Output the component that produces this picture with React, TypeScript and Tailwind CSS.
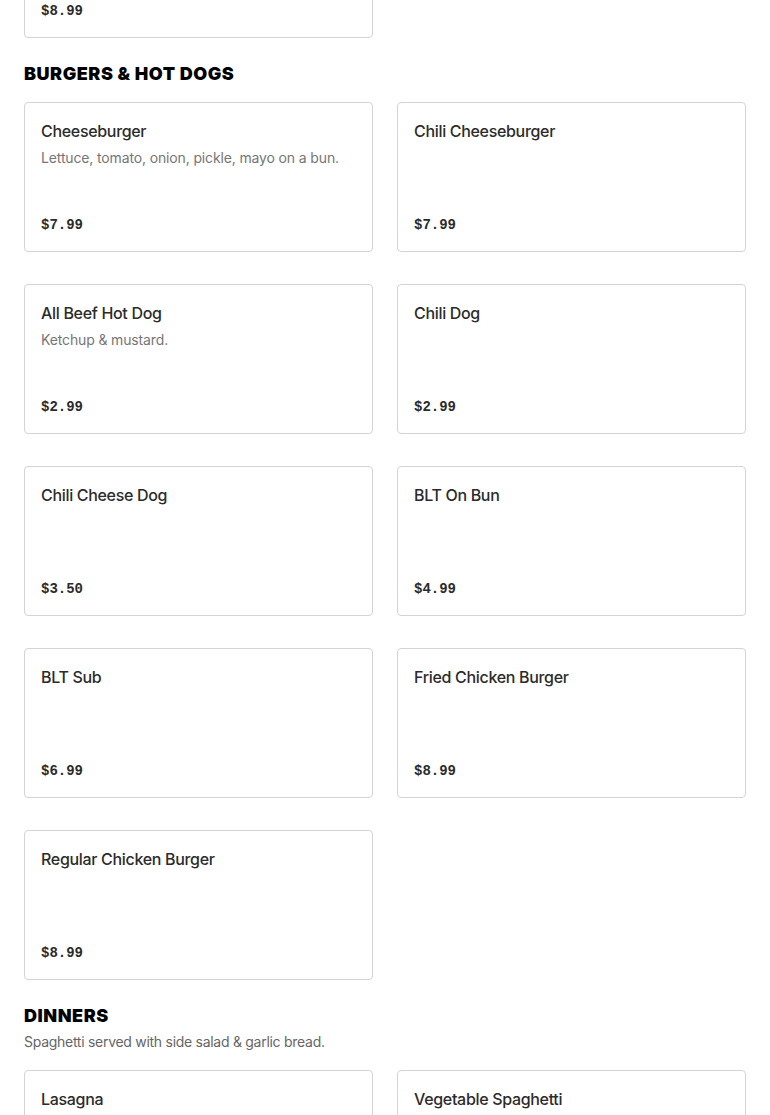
import React from "react";

type Item = { name: string; desc?: string; price: string };

const burgers: Item[] = [
  { name: "Cheeseburger", desc: "Lettuce, tomato, onion, pickle, mayo on a bun.", price: "$7.99" },
  { name: "Chili Cheeseburger", price: "$7.99" },
  { name: "All Beef Hot Dog", desc: "Ketchup & mustard.", price: "$2.99" },
  { name: "Chili Dog", price: "$2.99" },
  { name: "Chili Cheese Dog", price: "$3.50" },
  { name: "BLT On Bun", price: "$4.99" },
  { name: "BLT Sub", price: "$6.99" },
  { name: "Fried Chicken Burger", price: "$8.99" },
  { name: "Regular Chicken Burger", price: "$8.99" },
];

const dinners: Item[] = [
  { name: "Lasagna", price: "$12.99" },
  { name: "Vegetable Spaghetti", price: "$10.99" },
];

function Card({ item }: { item: Item }) {
  return (
    <div className="flex h-[150px] flex-col rounded-[4px] border border-[#d4d4d4] bg-white p-4">
      <div className="text-[16px] leading-6 font-medium tracking-[-0.02em] text-[#2b2b2b]">{item.name}</div>
      {item.desc && (
        <div className="mt-[5px] text-[14px] leading-5 tracking-[-0.01em] text-[#767676]">{item.desc}</div>
      )}
      <div
        className="mt-auto text-[14px] leading-5 font-bold text-[#2b2b2b]"
        style={{ fontFamily: '"Liberation Mono", monospace' }}
      >
        {item.price}
      </div>
    </div>
  );
}

export default function App() {
  return (
    <div
      className="h-[1115px] overflow-hidden bg-white px-6"
      style={{ fontFamily: 'Inter, "Noto Sans", Arial, sans-serif' }}
    >
      <div className="-mt-[112px] grid grid-cols-2 gap-x-6 gap-y-8">
        <Card item={{ name: "Chicken Sandwich", price: "$8.99" }} />
      </div>

      <h2 className="mt-[22px] text-[18px] leading-7 font-black tracking-[0.03em] text-black">
        BURGERS &amp; HOT DOGS
      </h2>
      <div className="mt-[14px] grid grid-cols-2 gap-x-6 gap-y-8">
        {burgers.map((b) => (
          <Card key={b.name} item={b} />
        ))}
      </div>

      <h2 className="mt-[22px] text-[18px] leading-7 font-black tracking-[0.03em] text-black">
        DINNERS
      </h2>
      <div className="mt-[2px] text-[14px] leading-5 tracking-[-0.02em] text-[#666]">
        Spaghetti served with side salad &amp; garlic bread.
      </div>
      <div className="mt-[18px] grid grid-cols-2 gap-x-6 gap-y-8">
        {dinners.map((b) => (
          <Card key={b.name} item={b} />
        ))}
      </div>
    </div>
  );
}
